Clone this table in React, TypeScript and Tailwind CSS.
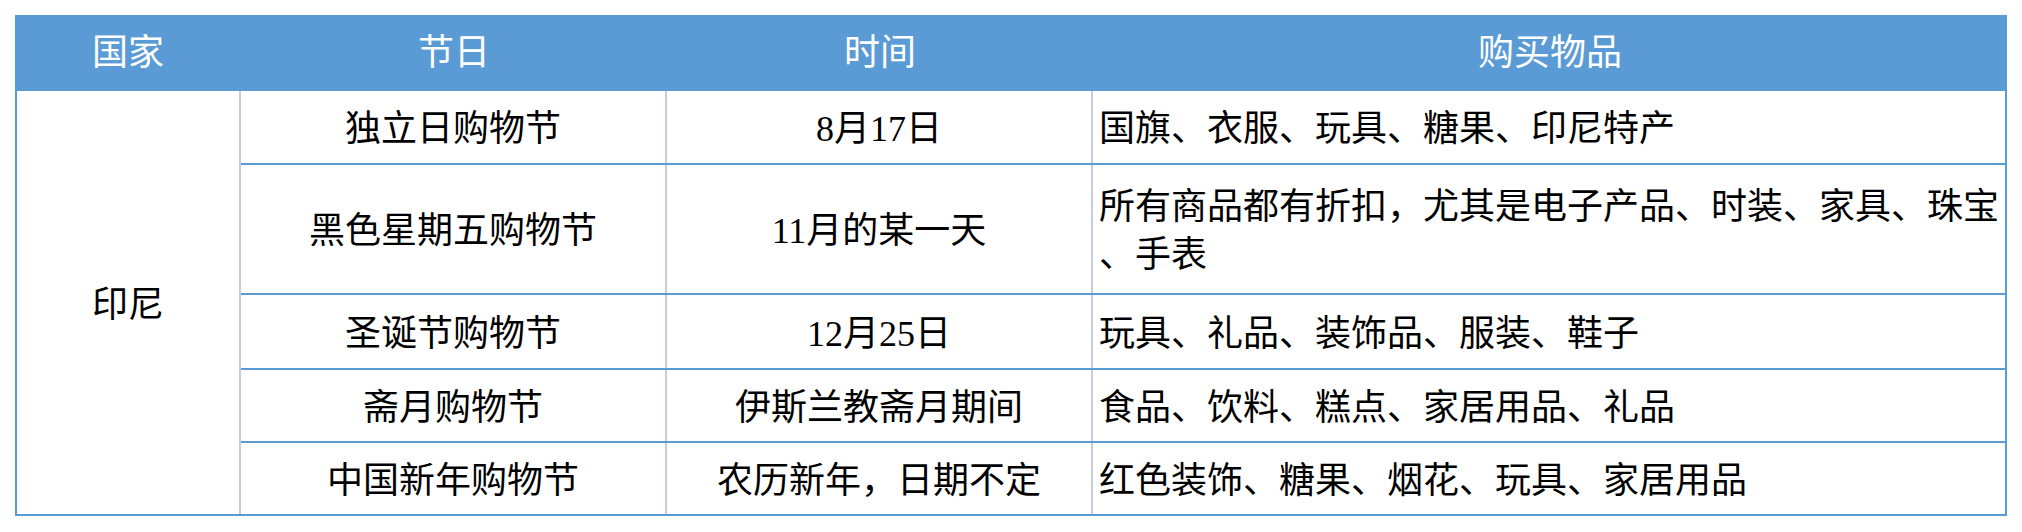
import React from "react";

const font = { fontFamily: '"Liberation Serif", "Noto Sans CJK SC", serif' };

type Row = { name: string; time: string; items: React.ReactNode; h: string };

const rows: Row[] = [
  { name: "独立日购物节", time: "8月17日", items: "国旗、衣服、玩具、糖果、印尼特产", h: "h-[72px]" },
  {
    name: "黑色星期五购物节",
    time: "11月的某一天",
    items: (
      <>
        <span className="block whitespace-nowrap">所有商品都有折扣，尤其是电子产品、时装、家具、珠宝</span>
        <span className="block whitespace-nowrap">、手表</span>
      </>
    ),
    h: "h-[130px]",
  },
  { name: "圣诞节购物节", time: "12月25日", items: "玩具、礼品、装饰品、服装、鞋子", h: "h-[75px]" },
  { name: "斋月购物节", time: "伊斯兰教斋月期间", items: "食品、饮料、糕点、家居用品、礼品", h: "h-[73px]" },
  { name: "中国新年购物节", time: "农历新年，日期不定", items: "红色装饰、糖果、烟花、玩具、家居用品", h: "h-[73px]" },
];

export default function App() {
  return (
    <div className="w-[2022px] h-[532px] bg-white pt-[15px] pl-[15px]" style={font}>
      <div className="w-[1992px] text-[36px] leading-[48px] text-black">
        <div className="flex h-[76px] bg-[#5b9bd5] text-white items-center">
          <div className="w-[226px] text-center">国家</div>
          <div className="w-[426px] text-center">节日</div>
          <div className="w-[426px] text-center">时间</div>
          <div className="flex-1 text-center">购买物品</div>
        </div>
        <div className="flex border-l-2 border-r-2 border-b-2 border-[#5b9bd5]">
          <div className="w-[224px] border-r-2 border-[#c5cce0] flex items-center justify-center pt-[4px]">印尼</div>
          <div className="flex-1 flex flex-col">
            {rows.map((r, i) => (
              <div
                key={i}
                className={`flex ${r.h} ${i > 0 ? "border-t-2 border-[#5b9bd5]" : ""}`}
              >
                <div className="w-[426px] border-r-2 border-[#c5cce0] flex items-center justify-center whitespace-nowrap pt-[4px]">
                  {r.name}
                </div>
                <div className="w-[426px] border-r-2 border-[#c5cce0] flex items-center justify-center whitespace-nowrap pt-[4px]">
                  {r.time}
                </div>
                <div className="flex-1 flex flex-col justify-center pl-[6px] whitespace-nowrap pt-[4px]">
                  <div>{r.items}</div>
                </div>
              </div>
            ))}
          </div>
        </div>
      </div>
    </div>
  );
}
